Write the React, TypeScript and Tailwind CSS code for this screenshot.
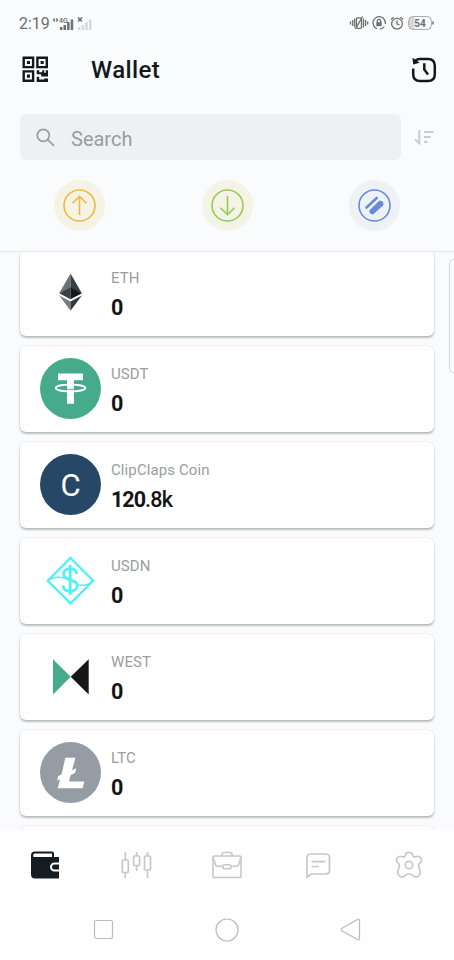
import type { ReactNode } from "react";

const tokens = [
  { name: "ETH", amount: "0", decimals: "", icon: <EthIcon /> },
  { name: "USDT", amount: "0", decimals: "", icon: <UsdtIcon /> },
  { name: "ClipClaps Coin", amount: "120", decimals: ".8k", icon: <ClipIcon /> },
  { name: "USDN", amount: "0", decimals: "", icon: <UsdnIcon /> },
  { name: "WEST", amount: "0", decimals: "", icon: <WestIcon /> },
  { name: "LTC", amount: "0", decimals: "", icon: <LtcIcon /> },
];

function EthIcon() {
  return (
    <svg width="61" height="61" viewBox="0 0 61 61">
      <path d="M30.5 11.5 19.2 31.3l11.3-4.8z" fill="#6b7377" />
      <path d="M30.5 11.5 41.9 31.3l-11.4-4.8z" fill="#3a4144" />
      <path d="M30.5 25.6 19.2 31.3l11.3 5.9z" fill="#3a4144" />
      <path d="M30.5 25.6 41.9 31.3l-11.4 5.9z" fill="#11181a" />
      <path d="m19.2 33.6 11.3 5.9v9.3z" fill="#777e81" />
      <path d="m41.9 33.6-11.4 5.9v9.3z" fill="#33393c" />
    </svg>
  );
}

function UsdtIcon() {
  return (
    <svg width="61" height="61" viewBox="0 0 61 61">
      <circle cx="30.5" cy="30.5" r="30.5" fill="#45ab8b" />
      <path d="M18 15.5h25v6.7h-9.1v23.6h-6.8V22.2H18z" fill="#fff" />
      <ellipse cx="30.5" cy="30" rx="14.8" ry="3.4" fill="none" stroke="#fff" strokeWidth="1.800" />
      <path d="M27.1 31.4h6.8" stroke="#45ab8b" strokeWidth="0.9" />
    </svg>
  );
}

function ClipIcon() {
  return (
    <div className="flex size-[61px] items-center justify-center rounded-full bg-[#264766] pt-0.5 text-[31px] leading-none text-white">
      C
    </div>
  );
}

function UsdnIcon() {
  return (
    <svg width="61" height="61" viewBox="0 0 61 61" fill="none" stroke="#4df1f6">
      <path d="M30.5 8 53.2 30.7 30.5 53.4 7.8 30.7z" strokeWidth="2.300" />
      <path d="M9 30c3-2.800 6.500-3 10-2.700l9 1" strokeWidth="1.500" />
      <path d="M52 31.500c-3 3.500-5.500 3.500-8.500 3.700H36" strokeWidth="1.500" />
      <path
        d="M36.6 24c-.4-3.6-2.8-5.3-6.5-5.3-3.9 0-6.5 2-6.5 5.3 0 7.6 13.7 4.400 13.7 11.500 0 3.500-2.800 5.700-7 5.700-4.300 0-7-2.300-7.300-5.900"
        strokeWidth="2.800"
      />
      <path d="M30.2 15v30" strokeWidth="2.800" />
    </svg>
  );
}

function WestIcon() {
  return (
    <svg width="61" height="61" viewBox="0 0 61 61">
      <path d="M13 13.200 30.700 30.800 13 48.500z" fill="#45ab8b" />
      <path d="M48.700 13.200 30.700 30.800 48.700 48.500z" fill="#161616" />
    </svg>
  );
}

function LtcIcon() {
  return (
    <svg width="61" height="61" viewBox="0 0 61 61">
      <circle cx="30.5" cy="30.5" r="30.5" fill="#959ca3" />
      <path
        d="M25.3 15.8h10.200l-3.500 12.400 4.300-1.900-1.300 4.800-4.300 1.900-1.800 6.500h15.400l-1.700 6.800H17.600l2.500-9-3.100 1.300 1.300-4.700 3.200-1.400z"
        fill="#fff"
      />
    </svg>
  );
}

function StatusBar() {
  return (
    <div className="flex h-[46px] items-center justify-between px-[19px] text-[#6c6f71]">
      <div className="flex items-center gap-[2px] pt-px">
        <span className="text-[16px] leading-none">2:19</span>
        <svg width="42" height="18" viewBox="0 0 42 18" fill="currentColor">
          <path d="M2.8 3.5 1.500 5l1.300 1.500M4.200 3.500 5.500 5 4.200 6.500" fill="none" stroke="currentColor" strokeWidth="1.200" />
          <text x="7" y="8" fontSize="7" fontWeight="500">4G</text>
          <path d="M8 12h2.400v3H8zM11.500 10H14v5h-2.500zM15.100 7h2.500v8h-2.500zM18.700 4.500h2.500V15h-2.500z" />
          <path d="m26 2.500 4 4m0-4-4 4" stroke="currentColor" strokeWidth="1.600" />
          <path d="M26 12h2.400v3H26zM29.700 10h2.400v5h-2.400zM33.300 7h2.400v8h-2.400zM37 4.500h2.400V15H37z" fill="#d5d7d9" />
        </svg>
      </div>
      <svg width="86" height="18" viewBox="0 0 86 18" fill="none" stroke="currentColor" strokeWidth="1.300">
        <path d="M1.500 7.500v3M3.700 6v6M5.700 4.500v9M14.500 4.500v9M16.600 6v6M18.700 7.500v3" />
        <rect x="7.500" y="3.800" width="5" height="10.500" rx="1" />
        <path d="m6.500 15 7-12.500" />
        <path d="M28 14.700A6.200 6.200 0 1 1 36.300 10M35.300 12.500A6.200 6.200 0 0 1 31 15.100" />
        <rect x="27.300" y="8.200" width="5.400" height="4" fill="currentColor" stroke="none" />
        <path d="M28.300 8.500V7a1.700 1.700 0 0 1 3.400 0v1.500" />
        <circle cx="48" cy="9.700" r="5.400" />
        <path d="M48 6.500v3.600l2.500.6M42 5.500l2.700-2.300M54 5.500l-2.700-2.300" />
        <path d="M62.500 3h3v12h-3q-2.500-1-2.500-3.500v-5Q60 4 62.500 3z" fill="#d5d7d9" stroke="none" />
        <rect x="59.700" y="2.600" width="22.600" height="12.800" rx="4" stroke="#a2a5a7" strokeWidth="1" />
        <path d="M84 7.500v3" strokeWidth="1.500" />
        <text x="71" y="12.500" fontSize="10" fontWeight="700" textAnchor="middle" fill="currentColor" stroke="none">54</text>
      </svg>
    </div>
  );
}

function Header() {
  return (
    <div className="flex h-[47px] items-center pr-[17px] pl-[22px] text-[#15181a]">
      <svg width="27" height="27" viewBox="0 0 27 27" fill="none" stroke="currentColor" strokeWidth="2.400">
        <path d="M1.700 1.700h9.400v9.400H1.700zM15.400 1.700h9.400v9.400h-9.400zM1.700 15.400h9.400v9.400H1.700z" />
        <path
          d="M4.900 4.900H8V8H4.900zM18.600 4.900h3.100V8h-3.100zM4.900 18.600H8v3.100H4.900zM14.700 14.200h2.500v2h3v-2h2v2.500h1.600v-2.500H26v6.300h-6.800v-2.200h-4.500zM14.700 20.800h2.500v2.700h5V22.500H26v3.500H14.700z"
          fill="currentColor"
          stroke="none"
        />
      </svg>
      <h1 className="ml-[42px] pt-px text-[24px] leading-none font-medium tracking-[0.4px]">Wallet</h1>
      <svg className="ml-auto" width="26" height="26" viewBox="0 0 26 26" fill="none" stroke="currentColor" strokeWidth="2.500">
        <path d="M2.200 11.500V17c0 4.500 2.300 7 7 7h7.600c4.700 0 7-2.500 7-7V9c0-4.500-2.300-7-7-7H9C6.500 2 4.500 3 3.300 5" />
        <path d="M1.500.8 8.700 5.800l-6.500 1.700z" fill="currentColor" stroke="none" />
        <path d="M13.300 7.500v5l3 4" strokeLinecap="square" />
      </svg>
    </div>
  );
}

function SearchRow() {
  return (
    <div className="flex items-center pt-[21px] pl-5">
      <div className="flex h-[46px] w-[381px] items-center rounded-md bg-[#edf1f4] pl-4 text-[#999da0]">
        <svg width="19" height="19" viewBox="0 0 19 19" fill="none" stroke="currentColor" strokeWidth="1.700">
          <circle cx="7.300" cy="7.300" r="6" />
          <path d="m11.700 11.700 6.300 6.200" />
        </svg>
        <span className="ml-4 pt-1 text-[20px] leading-none">Search</span>
      </div>
      <svg className="ml-3" width="21" height="17" viewBox="0 0 21 17" fill="none" stroke="#c9cccd">
        <path d="M6.300 1v13.200L2 10.400" strokeWidth="2" />
        <path d="M11 3h9.500M11 8h6.500M11 13h3.500" strokeWidth="1.800" />
      </svg>
    </div>
  );
}

function Actions() {
  return (
    <div className="flex justify-between px-[54px] pt-5">
      <div className="flex size-[51px] items-center justify-center rounded-full bg-[#f5f4e4]">
        <svg width="33" height="33" viewBox="0 0 33 33" fill="none" stroke="#efb843" strokeWidth="1.600">
          <circle cx="16.500" cy="16.500" r="15.500" />
          <path d="M16.500 26V7.500M9.500 14.300l7-7 7 7" />
        </svg>
      </div>
      <div className="flex size-[51px] items-center justify-center rounded-full bg-[#f3f4e5]">
        <svg width="33" height="33" viewBox="0 0 33 33" fill="none" stroke="#98c959" strokeWidth="1.600">
          <circle cx="16.500" cy="16.500" r="15.500" />
          <path d="M16.500 7v18.500M9.500 18.700l7 7 7-7" />
        </svg>
      </div>
      <div className="flex size-[51px] items-center justify-center rounded-full bg-[#eef2f5]">
        <svg width="33" height="33" viewBox="0 0 33 33" fill="none" stroke="#6789df">
          <circle cx="16.500" cy="16.500" r="15.500" strokeWidth="1.600" />
          <path d="M8.500 18.500 18.700 9" strokeWidth="2.600" strokeLinecap="round" />
          <path d="M11.800 21.500 21.500 12l3.200 1 .3 3L15 25l-2.800-1z" fill="#6789df" strokeWidth="1" strokeLinejoin="round" />
        </svg>
      </div>
    </div>
  );
}

function TokenCard({ name, amount, decimals, icon }: { name: string; amount: string; decimals: string; icon: ReactNode }) {
  return (
    <div className="flex h-[86px] shrink-0 items-center rounded-md bg-white pb-px pl-5 shadow-[0_2px_2px_rgba(60,65,70,0.3),0_0_2px_rgba(60,65,70,0.2)]">
      {icon}
      <div className="ml-[10px] pt-1">
        <p className="text-[15px] leading-5 tracking-[0.1px] text-[#999da0]">{name}</p>
        <p className="mt-1.5 text-[21.5px] leading-7 font-bold tracking-[-1px] text-[#151515]">
          {amount}
          <span className="font-medium tracking-[-0.7px]">{decimals}</span>
        </p>
      </div>
    </div>
  );
}

function TabBar() {
  return (
    <nav className="flex h-[70px] shrink-0 items-center bg-[#fefefe] text-[#c6c8ca]">
      <div className="flex flex-1 justify-center">
        <svg width="30" height="28" viewBox="0 0 30 28">
          <path d="M5 .5h17q2 0 2 2V6h5v5.500h-4.500a4.500 4.500 0 0 0 0 9H29v7H5q-4 0-4-4v-19q0-4 4-4z" fill="#151d22" />
          <path d="M4.500 2.500H22V6H3.500Q2.500 3.500 4.500 2.500z" fill="#fff" />
          <path d="M29 13.500h-4.500a2.500 2.500 0 0 0 0 5H29z" fill="#151d22" />
        </svg>
      </div>
      <div className="flex flex-1 justify-center">
        <svg width="31" height="28" viewBox="0 0 31 28" fill="none" stroke="currentColor" strokeWidth="1.700">
          <rect x="1.300" y="9" width="6" height="12.500" rx="1" />
          <rect x="12.600" y="5" width="6" height="9.500" rx="1" />
          <rect x="23.500" y="5" width="6" height="14" rx="1" />
          <path d="M4.300 1v8m0 12.500V27M15.600 1v4m0 9.500V20M26.500 1v4m0 14v8" />
        </svg>
      </div>
      <div className="flex flex-1 justify-center">
        <svg width="30" height="28" viewBox="0 0 30 28" fill="none" stroke="currentColor" strokeWidth="1.600">
          <rect x="1" y="5" width="28" height="21.500" rx="1" />
          <path d="M10 5V3.500Q10 1.500 12 1.500h6q2 0 2 2V5M1 6l2.500 8q.4 1.300 2 1.300H11M29 6l-2.500 8q-.4 1.300-2 1.300H19" />
          <rect x="11" y="13.700" width="8" height="4" rx="1.800" />
        </svg>
      </div>
      <div className="flex flex-1 justify-center">
        <svg className="mt-0.5 ml-0.5" width="25" height="26" viewBox="0 0 25 26" fill="none" stroke="currentColor" strokeWidth="1.700">
          <path d="M1 24.500V5q0-4 4-4h14.500q4 0 4 4v12q0 4-4 4H5z" strokeLinejoin="round" />
          <path d="M5.500 8.700h14M5.500 13.500H13" />
        </svg>
      </div>
      <div className="flex flex-1 justify-center">
        <svg width="28" height="28" viewBox="0 0 28 28" fill="none" stroke="currentColor" strokeWidth="1.700">
          <path
            d="M10.300 4.200Q10.500 1.300 14 1.300T17.700 4.200Q18 6.600 20.700 5.700 24.500 4.300 26 7.300 27.600 10.500 25 12 22.800 13.500 24 16.200L25 20Q25.800 23.400 23.100 25.200 20.200 27 18.200 24.700 16.500 23 14 23T9.800 24.700Q7.800 27 4.900 25.200 2.200 23.400 3 20L4 16.200Q5.200 13.500 3 12 .4 10.500 2 7.300 3.500 4.300 7.300 5.700 10 6.600 10.300 4.200z"
            strokeLinejoin="round"
          />
          <circle cx="14" cy="14" r="3.700" />
        </svg>
      </div>
    </nav>
  );
}

function SystemNav() {
  return (
    <div className="flex h-[60px] shrink-0 items-center justify-between bg-[#fefefe] px-[93px] pb-px">
      <svg width="21" height="21" viewBox="0 0 21 21" fill="none" stroke="#b9bbbd" strokeWidth="1.200">
        <rect x="1.500" y="1.500" width="18" height="18" rx="2" />
      </svg>
      <svg width="24" height="24" viewBox="0 0 24 24" fill="none" stroke="#b9bbbd" strokeWidth="1.200">
        <circle cx="12" cy="12" r="11" />
      </svg>
      <svg width="21" height="23" viewBox="0 0 21 23" fill="none" stroke="#b9bbbd" strokeWidth="1.200">
        <path d="M19.500 2.500v18q0 2-2 1L2 12.700q-1.500-1.200 0-2.400l15.500-8.800q2-1 2 1z" />
      </svg>
    </div>
  );
}

export default function App() {
  return (
    <div className="relative flex h-[960px] w-[454px] flex-col overflow-hidden bg-[#f9fbfc] font-[Roboto,sans-serif]">
      <header className="h-[252px] shrink-0 border-b border-[#e5e7e9]">
        <StatusBar />
        <Header />
        <SearchRow />
        <Actions />
      </header>

      <main className="h-[578px] overflow-hidden px-5">
        <div className="-mt-0.5 flex flex-col gap-[10px]">
          {tokens.map((token) => (
            <TokenCard key={token.name} {...token} />
          ))}
          <div className="h-[86px] rounded-md bg-[#fdfdfe] shadow-[0_0_2px_rgba(60,65,70,0.2)]" />
        </div>
      </main>

      <TabBar />
      <SystemNav />

      {/* edge panel handle */}
      <div className="absolute top-[259px] -right-1 h-[114px] w-[9px] rounded-md border border-[#d3d6d9] bg-[#fbfcfd]" />
    </div>
  );
}
